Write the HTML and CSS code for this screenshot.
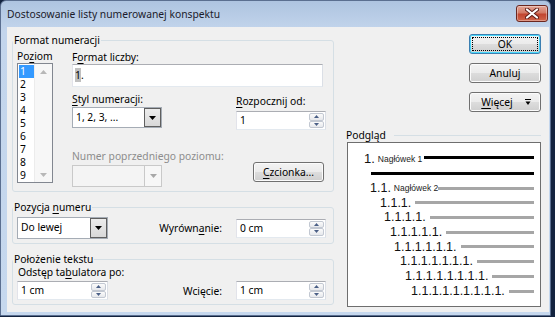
FILE: index.html
```html
<!DOCTYPE html>
<html lang="pl">
<head>
  <meta charset="UTF-8">
  <title>Dostosowanie listy numerowanej konspektu</title>
  <link rel="stylesheet" href="styles.css">
</head>
<body>
  <div class="window">
    <div class="titlebar">
      <span class="title">Dostosowanie listy numerowanej konspektu</span>
      <button class="close" aria-label="Zamknij">
        <svg width="14" height="11" viewBox="0 0 14 11">
          <path d="M2 1.5 L12 9.5 M12 1.5 L2 9.5" stroke="#5a1a14" stroke-width="4" stroke-linecap="round"/>
          <path d="M2 1.5 L12 9.5 M12 1.5 L2 9.5" stroke="#ffffff" stroke-width="2.2" stroke-linecap="round"/>
        </svg>
      </button>
    </div>

    <div class="client">
      <!-- left column: three group boxes -->
      <div class="left">
        <fieldset class="group fmt">
          <legend>Format numeracji</legend>
          <div class="fmt-body">
            <div class="levels">
              <div class="lbl">Po<u>z</u>iom</div>
              <div class="listbox">
                <div class="items">
                  <div class="item sel">1</div>
                  <div class="item">2</div>
                  <div class="item">3</div>
                  <div class="item">4</div>
                  <div class="item">5</div>
                  <div class="item">6</div>
                  <div class="item">7</div>
                  <div class="item">8</div>
                  <div class="item">9</div>
                </div>
                <div class="vscroll">
                  <svg width="7" height="4" viewBox="0 0 7 4"><path d="M0 4 L3.5 0 L7 4 Z" fill="#b8b8b8"/></svg>
                  <svg width="7" height="4" viewBox="0 0 7 4"><path d="M0 0 L3.5 4 L7 0 Z" fill="#b8b8b8"/></svg>
                </div>
              </div>
            </div>

            <div class="fmt-main">
              <div class="lbl">F<u>o</u>rmat liczby:</div>
              <div class="textbox wide"><span class="hl">1</span>.</div>

              <div class="row r2">
                <div class="col-a">
                  <div class="lbl"><u>S</u>tyl numeracji:</div>
                  <div class="combo">
                    <span class="value">1, 2, 3, ...</span>
                    <span class="drop"><svg width="7" height="4" viewBox="0 0 7 4"><path d="M0 0 L3.5 4 L7 0 Z" fill="#000"/></svg></span>
                  </div>
                </div>
                <div class="col-b">
                  <div class="lbl"><u>R</u>ozpocznij od:</div>
                  <div class="spin">
                    <span class="value">1</span>
                    <span class="arrows">
                      <span class="arr"><svg width="5" height="3" viewBox="0 0 5 3"><path d="M0 3 L2.5 0 L5 3 Z" fill="#4a5f86"/></svg></span>
                      <span class="arr"><svg width="5" height="3" viewBox="0 0 5 3"><path d="M0 0 L2.5 3 L5 0 Z" fill="#4a5f86"/></svg></span>
                    </span>
                  </div>
                </div>
              </div>

              <div class="row r3">
                <div class="col-a">
                  <div class="lbl disabled">Numer poprzedniego poziomu:</div>
                  <div class="combo off">
                    <span class="value"></span>
                    <span class="drop"><svg width="7" height="4" viewBox="0 0 7 4"><path d="M0 0 L3.5 4 L7 0 Z" fill="#a8a8a8"/></svg></span>
                  </div>
                </div>
                <button class="btn font-btn"><u>C</u>zcionka...</button>
              </div>
            </div>
          </div>
        </fieldset>

        <fieldset class="group pos">
          <legend>Pozycja <u>n</u>umeru</legend>
          <div class="line-row">
            <div class="combo short">
              <span class="value">Do lewej</span>
              <span class="drop"><svg width="7" height="4" viewBox="0 0 7 4"><path d="M0 0 L3.5 4 L7 0 Z" fill="#000"/></svg></span>
            </div>
            <span class="side-lbl">Wyrówn<u>a</u>nie:</span>
            <div class="spin">
              <span class="value">0 cm</span>
              <span class="arrows">
                <span class="arr"><svg width="5" height="3" viewBox="0 0 5 3"><path d="M0 3 L2.5 0 L5 3 Z" fill="#4a5f86"/></svg></span>
                <span class="arr"><svg width="5" height="3" viewBox="0 0 5 3"><path d="M0 0 L2.5 3 L5 0 Z" fill="#4a5f86"/></svg></span>
              </span>
            </div>
          </div>
        </fieldset>

        <fieldset class="group txt">
          <legend>Położenie tekstu</legend>
          <div class="lbl">Odstęp ta<u>b</u>ulatora po:</div>
          <div class="line-row">
            <div class="spin short">
              <span class="value">1 cm</span>
              <span class="arrows">
                <span class="arr"><svg width="5" height="3" viewBox="0 0 5 3"><path d="M0 3 L2.5 0 L5 3 Z" fill="#4a5f86"/></svg></span>
                <span class="arr"><svg width="5" height="3" viewBox="0 0 5 3"><path d="M0 0 L2.5 3 L5 0 Z" fill="#4a5f86"/></svg></span>
              </span>
            </div>
            <span class="side-lbl">Wcięcie:</span>
            <div class="spin">
              <span class="value">1 cm</span>
              <span class="arrows">
                <span class="arr"><svg width="5" height="3" viewBox="0 0 5 3"><path d="M0 3 L2.5 0 L5 3 Z" fill="#4a5f86"/></svg></span>
                <span class="arr"><svg width="5" height="3" viewBox="0 0 5 3"><path d="M0 0 L2.5 3 L5 0 Z" fill="#4a5f86"/></svg></span>
              </span>
            </div>
          </div>
        </fieldset>
      </div>

      <!-- right column: buttons and preview -->
      <div class="right">
        <div class="buttons">
          <button class="btn default">OK</button>
          <button class="btn">Anuluj</button>
          <button class="btn more"><span><u>W</u>ięcej</span>
            <svg width="6" height="7" viewBox="0 0 6 7"><path d="M0 0.5 H6" stroke="#000" stroke-width="1"/><path d="M0.5 2.5 L3 6 L5.5 2.5 Z" fill="#000"/></svg>
          </button>
        </div>

        <div class="preview-head"><span>Podgląd</span><span class="rule"></span></div>
        <div class="preview">
          <div class="pv lv1"><span class="num big">1.</span><span class="head">Nagłówek 1</span><span class="bar dark"></span></div>
          <div class="pv lv2"><span class="bar dark"></span></div>
          <div class="pv lv3"><span class="num">1.1.</span><span class="head">Nagłówek 2</span><span class="bar"></span></div>
          <div class="pv lv4"><span class="num">1.1.1.</span><span class="bar"></span></div>
          <div class="pv lv5"><span class="num">1.1.1.1.</span><span class="bar"></span></div>
          <div class="pv lv6"><span class="num">1.1.1.1.1.</span><span class="bar"></span></div>
          <div class="pv lv7"><span class="num">1.1.1.1.1.1.</span><span class="bar"></span></div>
          <div class="pv lv8"><span class="num">1.1.1.1.1.1.1.</span><span class="bar"></span></div>
          <div class="pv lv9"><span class="num">1.1.1.1.1.1.1.1.</span><span class="bar"></span></div>
          <div class="pv lv10"><span class="num">1.1.1.1.1.1.1.1.1.</span><span class="bar"></span></div>
        </div>
      </div>
    </div>
  </div>
</body>
</html>
```

FILE: styles.css
```css
* {
  box-sizing: border-box;
}

body {
  margin: 0;
  width: 555px;
  height: 317px;
  overflow: hidden;
  background: #13233f;
  font-family: "Noto Sans", sans-serif;
  font-size: 10.3px;
  color: #000;
}

u {
  text-decoration-thickness: 1px;
  text-underline-offset: 2px;
}

.window {
  width: 551px;
  height: 316px;
  border: 1px solid #5b6f90;
  border-radius: 6px 6px 0 0;
  background: linear-gradient(#aec4e0, #c3d5ec 30px, #c6d8ee);
  padding: 0 1px 3px 6px;
  display: flex;
  flex-direction: column;
}

.titlebar {
  height: 26px;
  display: flex;
  justify-content: space-between;
  align-items: flex-start;
}

.title {
  font-size: 10.3px;
  line-height: 14px;
  margin-top: 6px;
  color: #1b1b2b;
}

.close {
  width: 32px;
  height: 17px;
  margin-top: 4px;
  margin-right: 1px;
  padding: 0;
  border: 1px solid #6b2720;
  border-radius: 3px;
  background: linear-gradient(#e3a597, #d37a65 45%, #c2452f 55%, #d0654a);
  box-shadow: inset 0 0 0 1px rgba(255, 255, 255, 0.35);
  display: flex;
  align-items: center;
  justify-content: center;
}

.client {
  flex: 1;
  background: #f0f0f0;
  display: flex;
  gap: 12px;
  padding: 6px 8px 0 5px;
}

.left {
  width: 322px;
  display: flex;
  flex-direction: column;
  gap: 8px;
}

/* group boxes */
.group {
  margin: 0;
  border: 1px solid #d5dfe5;
  border-radius: 3px;
  padding: 0 7px 4px 4px;
}

.group legend {
  padding: 0 1px;
  margin-left: -4px;
  line-height: 14px;
}

.lbl {
  line-height: 14px;
  white-space: nowrap;
}

.disabled {
  color: #8d8d8d;
}

.fmt-body {
  display: flex;
  margin-top: 2px;
}

.levels {
  width: 36px;
}

.listbox {
  height: 120px;
  border: 1px solid #828790;
  background: #fff;
  display: flex;
}

.items {
  width: 16px;
  padding: 1px 0 0 1px;
}

.item {
  height: 13px;
  line-height: 13px;
  padding-left: 1px;
}

.item.sel {
  background: #3399ff;
  color: #fff;
}

.vscroll {
  flex: 1;
  background: #f7f7f7;
  border-left: 1px solid #ececec;
  display: flex;
  flex-direction: column;
  justify-content: space-between;
  align-items: center;
  padding: 6px 0 5px;
}

.fmt-main {
  margin-left: 19px;
  margin-top: 1px;
  width: 254px;
}

.textbox {
  height: 23px;
  border: 1px solid #abadb3;
  border-color: #abadb3 #dbdfe6 #e3e9ef #e2e3ea;
  background: #fff;
  padding: 3px 0 0 2px;
  line-height: 15px;
}

.textbox.wide {
  width: 251px;
}

.hl {
  background: #c0c0c0;
}

.row {
  display: flex;
}

.r2 {
  margin-top: 5px;
}

.col-a {
  width: 90px;
}

.r2 .col-b {
  margin-left: 74px;
  margin-top: 2px;
}

.r2 .combo {
  margin-top: 1px;
}

.r2 .spin {
  margin-top: 3px;
}

.r3 {
  margin-top: 19px;
}

.r3 .combo {
  margin-top: 2px;
  height: 22px;
}

/* combo box */
.combo {
  width: 90px;
  height: 21px;
  border: 1px solid #a5acb5;
  background: #fff;
  display: flex;
  align-items: stretch;
}

.combo .value {
  flex: 1;
  padding-left: 3px;
  line-height: 19px;
}

.combo .drop {
  width: 17px;
  border: 1px solid #5f5f5f;
  background: linear-gradient(#ececec, #d8d8d8);
  display: flex;
  align-items: center;
  justify-content: center;
}

.combo.off {
  border-color: #c9c9c9;
  background: #f4f4f4;
}

.combo.off .drop {
  border-color: #c9c9c9;
  border-width: 0 0 0 1px;
  background: #f7f7f7;
}

.combo.short {
  width: 91px;
  height: 22px;
}

/* spin box */
.spin {
  width: 90px;
  height: 19px;
  border: 1px solid #abadb3;
  border-color: #abadb3 #dbdfe6 #e3e9ef #e2e3ea;
  background: #fff;
  display: flex;
}

.spin .value {
  flex: 1;
  padding-left: 3px;
  line-height: 17px;
}

.spin .arrows {
  width: 16px;
  display: flex;
  flex-direction: column;
  padding: 1px 1px 1px 0;
}

.arr {
  flex: 1;
  border: 1px solid #c2c8d2;
  border-radius: 2px;
  background: linear-gradient(#fbfbfb, #e6e8ec);
  display: flex;
  align-items: center;
  justify-content: center;
}

.spin.short {
  width: 91px;
}

/* buttons */
.btn {
  position: relative;
  height: 20px;
  width: 72px;
  padding: 0;
  border: 1px solid #707070;
  border-radius: 3px;
  background: linear-gradient(#f3f3f3, #ebebeb 50%, #dddddd 50%, #cfcfcf);
  box-shadow: inset 0 0 0 1px #fbfbfb;
  font: inherit;
  color: #000;
  line-height: 16px;
}

.btn.default {
  border-color: #3c7fb1;
  box-shadow: inset 0 0 0 1px #48d8fb;
}

.btn.default::after {
  content: "";
  position: absolute;
  inset: 2px;
  border: 1px dotted #000;
}

.font-btn {
  width: 71px;
  margin-left: 91px;
  margin-top: 13px;
}

.more {
  display: flex;
  align-items: center;
  justify-content: center;
  gap: 12px;
  padding-left: 2px;
}

/* second and third groups */
.line-row {
  display: flex;
  align-items: center;
}

.pos .line-row {
  margin-top: 3px;
}

.side-lbl {
  flex: 1;
  text-align: right;
  padding-right: 14px;
  white-space: nowrap;
}

.txt .lbl {
  margin-top: -1px;
  padding-left: 1px;
}

.txt .line-row {
  margin-top: 2px;
}

/* right column */
.right {
  flex: 1;
  display: flex;
  flex-direction: column;
}

.buttons {
  display: flex;
  flex-direction: column;
  align-items: flex-end;
  gap: 9px;
  margin-top: 1px;
}

.preview-head {
  display: flex;
  align-items: center;
  margin-top: 16px;
  line-height: 14px;
}

.preview-head .rule {
  flex: 1;
  height: 1px;
  background: #d5dfe5;
  margin-left: 8px;
}

.preview {
  height: 165px;
  margin-left: 1px;
  border: 1px solid #6e6e6e;
  background: #fff;
  padding: 8.5px 6px 0 0;
}

.pv {
  height: 14.7px;
  display: flex;
  align-items: center;
}

.num {
  font-family: "Liberation Sans", Arial, sans-serif;
  font-size: 12.5px;
  line-height: 1;
  color: #111;
}

.num.big {
  font-size: 13px;
}

.head {
  font-family: "Liberation Sans", Arial, sans-serif;
  font-size: 8.5px;
  margin-left: 3px;
  color: #222;
}

.bar {
  flex: 1;
  height: 3px;
  margin-left: 4px;
  background: #a6a6a6;
}

.bar.dark {
  background: #000;
  margin-left: 2px;
}

.lv1 { padding-left: 16px; }
.lv2 { padding-left: 21px; }
.lv3 { padding-left: 22px; }
.lv4 { padding-left: 32px; }
.lv5 { padding-left: 36px; }
.lv6 { padding-left: 42px; }
.lv7 { padding-left: 46px; }
.lv8 { padding-left: 52px; }
.lv9 { padding-left: 57px; }
.lv10 { padding-left: 63px; }

.lv1 .bar.dark { margin-top: -2px; }
.lv3 .bar { margin-left: 0; }
```
